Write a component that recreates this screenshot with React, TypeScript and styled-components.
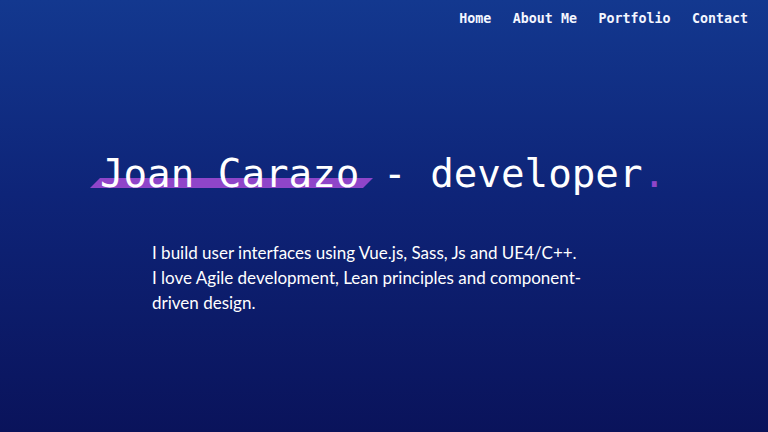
import React from "react";
import styled, { createGlobalStyle } from "styled-components";

const Global = createGlobalStyle`
  html, body { margin: 0; padding: 0; height: 100%; }
  body { overflow: hidden; }
  #root { height: 100%; }
`;

const Page = styled.div`
  width: 768px;
  height: 432px;
  background: linear-gradient(180deg, #13388f 0%, #0e2478 45%, #0a135b 100%);
  display: flex;
  flex-direction: column;
  color: #ffffff;
  box-sizing: border-box;
`;

const Nav = styled.nav`
  display: flex;
  justify-content: flex-end;
  gap: 21.5px;
  padding: 10px 20px 0 0;
`;

const NavLink = styled.a`
  font-family: "DejaVu Sans Mono", monospace;
  font-weight: bold;
  font-size: 13.3px;
  line-height: 18px;
  color: #f4f6ff;
  text-decoration: none;
`;

const Hero = styled.main`
  display: flex;
  flex-direction: column;
  align-items: center;
  padding-top: 123px;
`;

const Title = styled.h1`
  margin: 0 0 0 -2px;
  font-family: "DejaVu Sans Mono", monospace;
  font-weight: normal;
  font-size: 39.2px;
  line-height: 46px;
  white-space: nowrap;
  letter-spacing: 0;
`;

const Name = styled.span`
  position: relative;
  z-index: 0;
  &::before {
    content: "";
    position: absolute;
    z-index: -1;
    left: -5px;
    right: -8px;
    bottom: 8px;
    height: 10px;
    background: #8f45c9;
    transform: skewX(-45deg);
  }
`;

const Dot = styled.span`
  color: #8f45c9;
`;

const Intro = styled.p`
  width: 430px;
  margin: 43px 0 0 -34px;
  font-family: "Lato", sans-serif;
  font-size: 17px;
  line-height: 25px;
  color: #ffffff;
`;

export default function App() {
  return (
    <>
      <Global />
      <Page>
        <Nav>
          <NavLink href="#">Home</NavLink>
          <NavLink href="#">About Me</NavLink>
          <NavLink href="#">Portfolio</NavLink>
          <NavLink href="#">Contact</NavLink>
        </Nav>
        <Hero>
          <Title>
            <Name>Joan Carazo</Name> - developer<Dot>.</Dot>
          </Title>
          <Intro>
            I build user interfaces using Vue.js, Sass, Js and UE4/C++. I love
            Agile development, Lean principles and component-driven design.
          </Intro>
        </Hero>
      </Page>
    </>
  );
}
